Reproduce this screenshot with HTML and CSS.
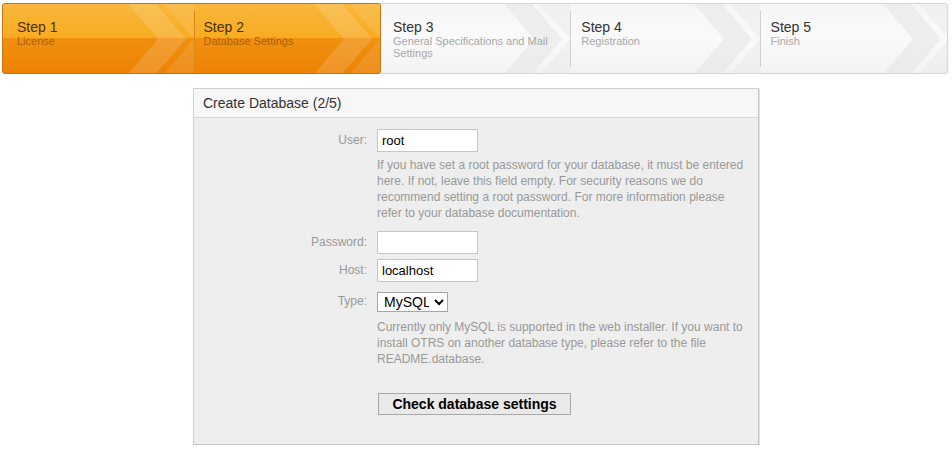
FILE: index.html
```html
<!DOCTYPE html>
<html>
<head>
<meta charset="utf-8">
<link rel="stylesheet" href="styles.css">
</head>
<body>
<div class="steps">
  <div class="done">
    <div class="step">
      <svg class="chev" width="66" height="70" viewBox="0 0 66 70"><polygon points="0,0 28,0 58,35 28,70 0,70 30,35" fill="#fff" opacity="0.14"/><polygon points="36,0 66,0 66,70 36,70 66,35" fill="#fff" opacity="0.10"/></svg>
      <div class="title">Step 1</div><div class="sub">License</div>
    </div>
    <div class="step sep">
      <svg class="chev" width="66" height="70" viewBox="0 0 66 70"><polygon points="0,0 28,0 58,35 28,70 0,70 30,35" fill="#fff" opacity="0.14"/><polygon points="36,0 66,0 66,70 36,70 66,35" fill="#fff" opacity="0.10"/></svg>
      <div class="title">Step 2</div><div class="sub">Database Settings</div>
    </div>
  </div>
  <div class="step todo">
    <svg class="chev" width="66" height="70" viewBox="0 0 66 70"><polygon points="0,0 28,0 58,35 28,70 0,70 30,35" fill="#e6e6e6" opacity="0.6"/><polygon points="36,0 66,0 66,70 36,70 66,35" fill="#e6e6e6" opacity="0.4"/></svg>
    <div class="title">Step 3</div><div class="sub">General Specifications and Mail Settings</div>
  </div>
  <div class="step todo sep">
    <svg class="chev" width="66" height="70" viewBox="0 0 66 70"><polygon points="0,0 28,0 58,35 28,70 0,70 30,35" fill="#e6e6e6" opacity="0.6"/><polygon points="36,0 66,0 66,70 36,70 66,35" fill="#e6e6e6" opacity="0.4"/></svg>
    <div class="title">Step 4</div><div class="sub">Registration</div>
  </div>
  <div class="step todo sep">
    <svg class="chev" width="66" height="70" viewBox="0 0 66 70"><polygon points="0,0 28,0 58,35 28,70 0,70 30,35" fill="#e6e6e6" opacity="0.6"/><polygon points="36,0 66,0 66,70 36,70 66,35" fill="#e6e6e6" opacity="0.4"/></svg>
    <div class="title">Step 5</div><div class="sub">Finish</div>
  </div>
</div>

<div class="box">
  <div class="head">Create Database (2/5)</div>
  <div class="body">
    <div class="row">
      <label class="lbl">User:</label>
      <div class="field">
        <input class="inp" type="text" value="root">
        <p class="help first">If you have set a root password for your database, it must be entered here. If not, leave this field empty. For security reasons we do recommend setting a root password. For more information please refer to your database documentation.</p>
      </div>
    </div>
    <div class="row">
      <label class="lbl">Password:</label>
      <div class="field"><input class="inp" type="password" value=""></div>
    </div>
    <div class="row">
      <label class="lbl">Host:</label>
      <div class="field"><input class="inp" type="text" value="localhost"></div>
    </div>
    <div class="row type">
      <label class="lbl">Type:</label>
      <div class="field">
        <select class="sel"><option>MySQL</option></select>
        <p class="help">Currently only MySQL is supported in the web installer. If you want to install OTRS on another database type, please refer to the file README.database.</p>
      </div>
    </div>
    <div class="row btnrow">
      <div class="lbl"></div>
      <div class="field"><button class="btn">Check database settings</button></div>
    </div>
  </div>
</div>
</body>
</html>
```

FILE: styles.css
```css
* { box-sizing: border-box; }
body {
  margin: 0;
  padding: 3px 4px 0 2px;
  font-family: "Liberation Sans", Arial, sans-serif;
  background: #fff;
}
.steps {
  display: flex;
  height: 71px;
  border: 1px solid #d4d4d4;
  border-radius: 3px;
  background: linear-gradient(#f6f6f6, #fafafa 50%, #f3f3f3);
  width: 946px;
}
.done {
  display: flex;
  flex: 0 0 379px;
  margin: -1px 0 -1px -1px;
  border: 1px solid #c77408;
  border-radius: 3px;
  background: linear-gradient(#f9b73a 0%, #f7ab22 50%, #f19010 50%, #ec8204 100%);
  overflow: hidden;
}
.step {
  position: relative;
  flex: 1;
  padding: 15px 10px 0 14px;
  overflow: hidden;
}
.done .sep { padding-left: 10px; }
.todo { flex: 0 0 189.3px; padding-left: 12px; }
.todo.sep { padding-left: 11px; }
.chev { position: absolute; right: 0; top: 0; }
.sep::before {
  content: "";
  position: absolute;
  left: 0; top: 7px; bottom: 6px;
  width: 1px;
  background: #cfcfcf;
}
.done .sep::before { background: #d68715; }
.title {
  position: relative;
  font-size: 14px;
  line-height: 16px;
  color: #333;
}
.sub {
  position: relative;
  font-size: 11px;
  line-height: 12px;
  margin-top: 0;
  color: #a8a8a8;
  width: 160px;
}
.done .title { color: #4a3000; }
.done .sub { color: #ad5f06; }

.box {
  width: 566px;
  margin: 14px 0 0 191px;
  border: 1px solid #d0d0d0;
  border-right-color: #c4c4c4;
  border-bottom-color: #c4c4c4;
  background: #eeeeee;
  box-shadow: 1px 1px 0 #e4e4e4;
}
.head {
  height: 29px;
  background: #f7f7f7;
  border-bottom: 1px solid #d8d8d8;
  padding: 6px 9px 0;
  font-size: 14px;
  line-height: 16px;
  color: #333;
}
.body { padding: 11px 0 24px; }
.row {
  display: grid;
  grid-template-columns: 173px 1fr;
  column-gap: 10px;
  margin-bottom: 5px;
}
.lbl {
  text-align: right;
  font-size: 12px;
  line-height: 23px;
  color: #999;
}
.inp {
  display: block;
  width: 101px;
  height: 23px;
  border: 1px solid #c6c6c6;
  background: #fff;
  font-family: "Liberation Sans", Arial, sans-serif;
  font-size: 13px;
  padding: 0 4px;
  color: #000;
  margin: 0;
}
.help {
  margin: 5px 0 0;
  padding-right: 8px;
  font-size: 12px;
  line-height: 16px;
  color: #999;
}
.help.first { margin-bottom: 5px; }
.row.type { margin-top: 9px; }
.row.type .lbl { line-height: 20px; }
.sel {
  display: block;
  width: 71px;
  height: 20px;
  border: 1px solid #a6a6a6;
  background: #fff;
  font-family: "Liberation Sans", Arial, sans-serif;
  font-size: 14px;
  color: #000;
  margin: 1px 0 0;
  padding: 0 2px;
}
.row.type .help { margin-top: 7px; }
.btnrow { margin-top: 26px; }
.btn {
  display: block;
  margin-left: 1px;
  width: 193px;
  height: 22px;
  border: 1px solid #a8a8a8;
  background: #e9e9e9;
  font-family: "Liberation Sans", Arial, sans-serif;
  font-weight: bold;
  font-size: 14px;
  color: #000;
  padding: 0;
}
```
